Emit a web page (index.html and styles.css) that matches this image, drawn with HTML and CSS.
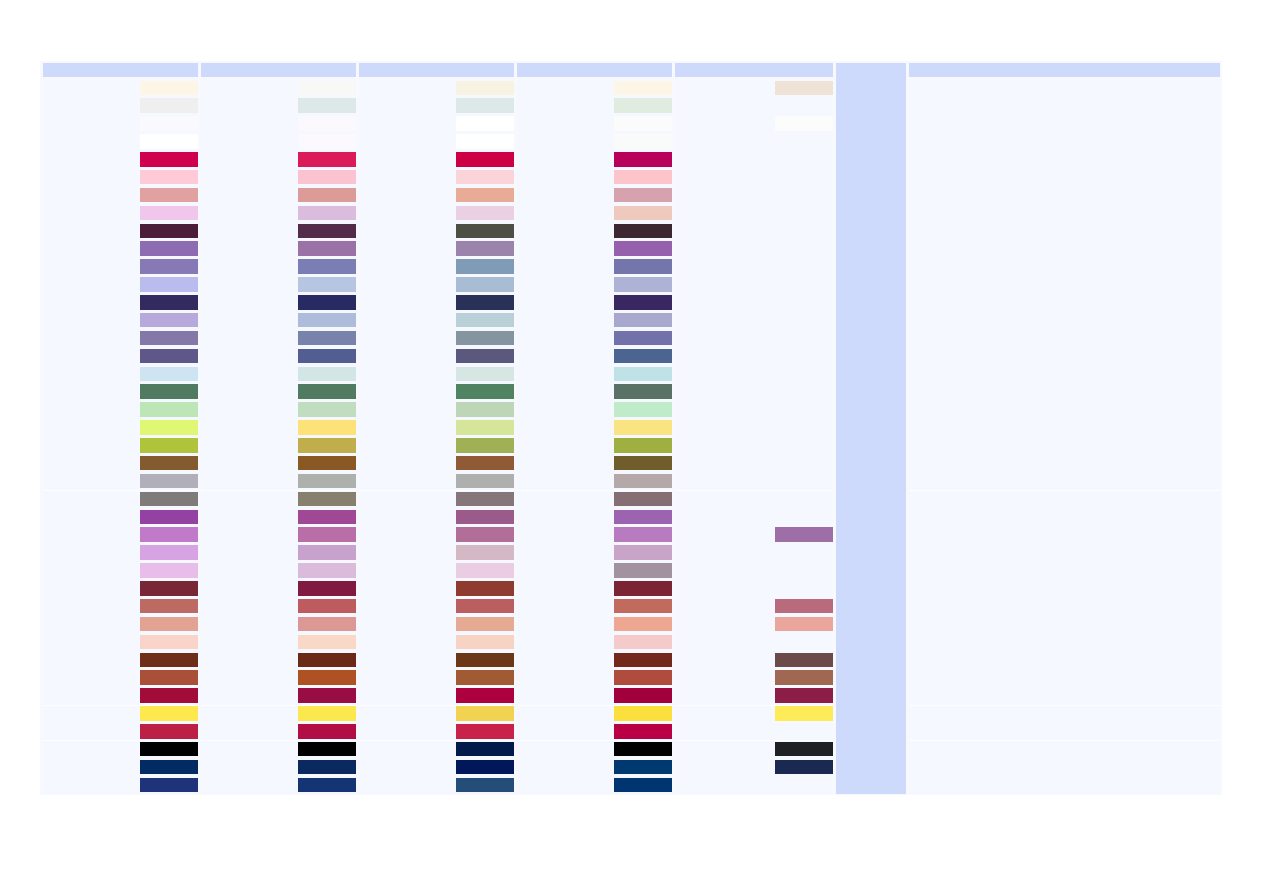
FILE: index.html
```html
<!DOCTYPE html>
<html lang="en">
<head>
    <meta charset="UTF-8">
    <meta name="viewport" content="width=device-width, initial-scale=1.0">
    <title>Colour Chart</title>
    <link rel="stylesheet" href="styles.css">
</head>
<body>

    <div class="board" id="board">
        <div class="head"></div>
        <div class="head"></div>
        <div class="head"></div>
        <div class="head"></div>
        <div class="head"></div>
        <div class="rail"></div>
        <div class="head"></div>
    </div>

    <script>
        // one row per shade, five suppliers per row ('' = no match)
        const shades = [
            ['#fdf5e6', '#f8f8f7', '#f8f2e2', '#fdf6e7', '#efe2d6'],
            ['#efefef', '#dde9e8', '#dde9e9', '#e0ece0', ''],
            ['#faf9fe', '#fbf9fe', '#ffffff', '#fbfbfb', '#fcfcfc'],
            ['#ffffff', '#fbf8fe', '#ffffff', '#fafafa', ''],
            ['#cf004e', '#db1a5a', '#cd0045', '#b8005a', ''],
            ['#fecad6', '#fbc3cf', '#fbd4da', '#fdc5c9', ''],
            ['#e0a1a0', '#dd9b98', '#e8ab96', '#d6a2ae', ''],
            ['#f0c6ec', '#dbbcde', '#ebd0e3', '#efc8be', ''],
            ['#4c1d38', '#532c49', '#4d4e44', '#3c2630', ''],
            ['#8e6cb2', '#9b72a8', '#9b84ac', '#9661ac', ''],
            ['#8778b6', '#7b7db5', '#7f9bb5', '#7475ab', ''],
            ['#b9bced', '#b5c5e2', '#a8bdd4', '#aeb2d5', ''],
            ['#332b60', '#282b63', '#2a3159', '#392761', ''],
            ['#b8a9dc', '#aebcdb', '#bad0d9', '#a8a7ce', ''],
            ['#8478a8', '#7783aa', '#8595a0', '#7271aa', ''],
            ['#5f5689', '#525d92', '#5b587e', '#4c6490', ''],
            ['#cfe4f2', '#d2e6e6', '#d6e6e3', '#bfe2e7', ''],
            ['#507b60', '#507b60', '#508361', '#5a7266', ''],
            ['#bde6b6', '#c0ddc0', '#bcd6b6', '#c0ebc8', ''],
            ['#e0f774', '#fde27a', '#d5e59a', '#fae482', ''],
            ['#afc43a', '#bfae4b', '#a0b055', '#a0b040', ''],
            ['#845b2f', '#8a5923', '#915a36', '#6f5d2c', ''],
            ['#b1b0ba', '#aeb0ab', '#aeb0ae', '#b5a8a8', ''],
            ['#807b7b', '#88806e', '#857779', '#866e75', ''],
            ['#9441a4', '#a04896', '#9a5b8a', '#9b63b0', ''],
            ['#c07ac9', '#ba6ea8', '#b06e99', '#b87bc0', '#9e6ea6'],
            ['#d6a4e2', '#c6a2cc', '#d4b8c3', '#c8a4c8', ''],
            ['#e8bde9', '#dabbdb', '#ebcde3', '#a292a0', ''],
            ['#792736', '#801a40', '#8f3b30', '#7a2434', ''],
            ['#bd6a62', '#bd5b5e', '#bb5e60', '#c06b5e', '#b86b7c'],
            ['#e3a393', '#dc9894', '#e6a991', '#eea790', '#eaa69c'],
            ['#fad4c8', '#f9d8c5', '#f6d3c3', '#f4cacb', ''],
            ['#6e2e1a', '#6b2a17', '#6c3717', '#72281a', '#6d4a4a'],
            ['#ab5038', '#ae5123', '#a05b35', '#af4c3e', '#a06853'],
            ['#a10c38', '#980d43', '#ad003e', '#a1003c', '#8b1d47'],
            ['#fde94d', '#fbe74e', '#f2d351', '#fbdf3d', '#fdeb57'],
            ['#bd2046', '#b20d45', '#c8224a', '#b90045', ''],
            ['#000000', '#000000', '#001a4a', '#000000', '#1f2024'],
            ['#012b62', '#0a2a5f', '#00185a', '#003870', '#1a2951'],
            ['#1e3379', '#153474', '#244d78', '#003571', '']
        ];
        // rows that open a new group get a thin rule on top
        const groupStarts = [23, 35, 37];

        const board = document.getElementById('board');
        board.insertAdjacentHTML('beforeend', shades.map((row, i) => {
            const brk = groupStarts.includes(i) ? ' brk' : '';
            const cells = row.map(c => `
                <div class="cell${brk}">${c ? `<span class="swatch" style="background:${c}"></span>` : ''}</div>`).join('');
            return cells + `<div class="cell${brk}"></div>`;
        }).join(''));
    </script>
</body>
</html>
```

FILE: styles.css
```css
:root {
    --bg-page: #ffffff;
    --bg-board: #f7f9fe;
    --bg-cell: #f5f8fe;
    --head: #cddafc;
    --rule: #fdfeff;
}

* { box-sizing: border-box; margin: 0; padding: 0; }
body { background: var(--bg-page); font-family: 'Liberation Sans', Arial, sans-serif; }

.board {
    margin: 61px 0 0 40px;
    width: 1182px;
    padding: 2px 2px 1px 3px;
    background: var(--bg-board);
    display: grid;
    grid-template-columns: 155px 155px 155px 155px 158px 70px 311px;
    grid-template-rows: 16px repeat(40, 17.88px);
    column-gap: 3px;
}

.head { height: 14px; background: var(--head); }
.rail { grid-column: 6; grid-row: 1 / -1; background: var(--head); }

.cell { display: flex; justify-content: flex-end; align-items: flex-start; padding-top: 1.6px; background: var(--bg-cell); }
.cell.brk { box-shadow: inset 0 1px 0 var(--rule); }
.swatch { display: block; width: 58px; height: 14.5px; }
```
